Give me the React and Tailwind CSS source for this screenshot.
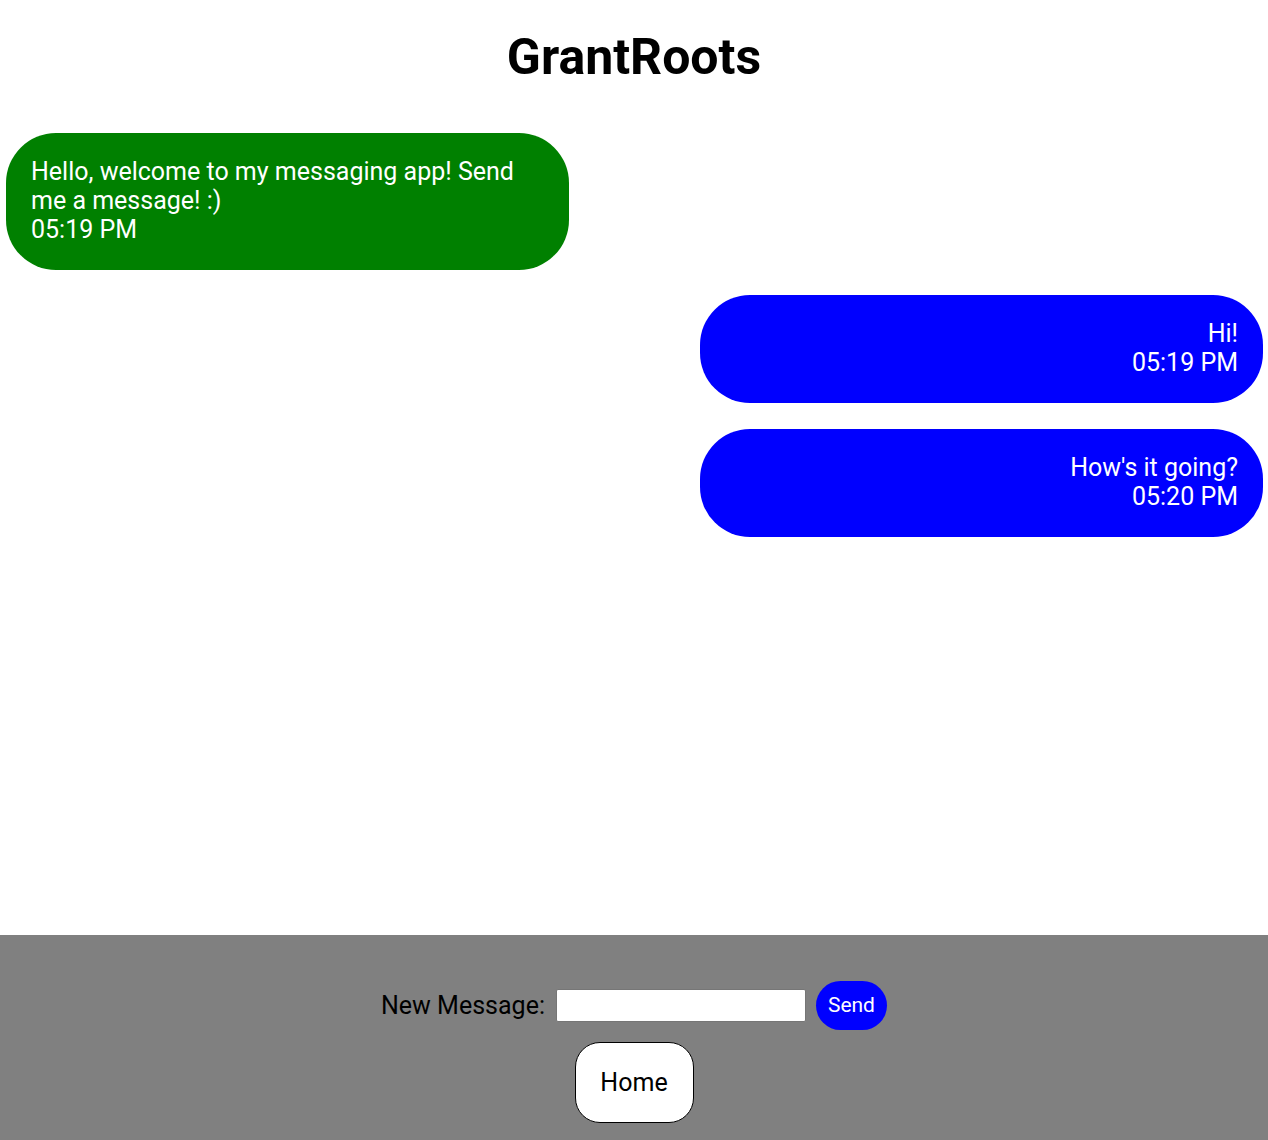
import React, { useState } from 'react';

const messages = [
  { id: 1, text: 'Hello, welcome to my messaging app! Send me a message! :)', time: '05:19 PM', mine: false },
  { id: 2, text: 'Hi!', time: '05:19 PM', mine: true },
  { id: 3, text: "How's it going?", time: '05:20 PM', mine: true },
];

const Bubble = ({ msg }) => (
  <div
    className={
      msg.mine
        ? 'ml-auto mr-[5px] w-[563px] rounded-[50px] bg-[#0000ff] px-[25px] pt-[24px] pb-[26px] text-right text-white'
        : 'ml-[6px] w-[563px] rounded-[50px] bg-[#008000] px-[25px] pt-[24px] pb-[26px] text-left text-white'
    }
  >
    <div>{msg.text}</div>
    <div>{msg.time}</div>
  </div>
);

export default function App() {
  const [draft, setDraft] = useState('');

  return (
    <div className="flex min-h-[1140px] flex-col bg-white font-['Roboto',sans-serif] text-[25px] leading-[29px]">
      <h1 className="pt-[27px] text-center text-[50px] font-bold leading-[60px] text-black">GrantRoots</h1>

      <div className="mt-[46px] flex flex-1 flex-col gap-[25px] [&>*:nth-child(3)]:mt-px">
        {messages.map(m => (
          <Bubble key={m.id} msg={m} />
        ))}
      </div>

      <div className="flex h-[205px] flex-col items-center bg-[#808080] pt-[46px]">
        <div className="flex items-center">
          <label className="mr-[11px] text-black">New Message:</label>
          <input
            value={draft}
            onChange={e => setDraft(e.target.value)}
            className="h-[33px] w-[250px] rounded-[2px] border border-[#767676] bg-white px-1 text-base"
          />
          <button className="ml-[10px] h-[49px] w-[71px] rounded-full bg-[#0000ff] text-[21px] text-white">Send</button>
        </div>
        <button className="mt-[12px] h-[81px] w-[119px] rounded-[25px] border border-black bg-white text-[25px] text-black">
          Home
        </button>
      </div>
    </div>
  );
}
